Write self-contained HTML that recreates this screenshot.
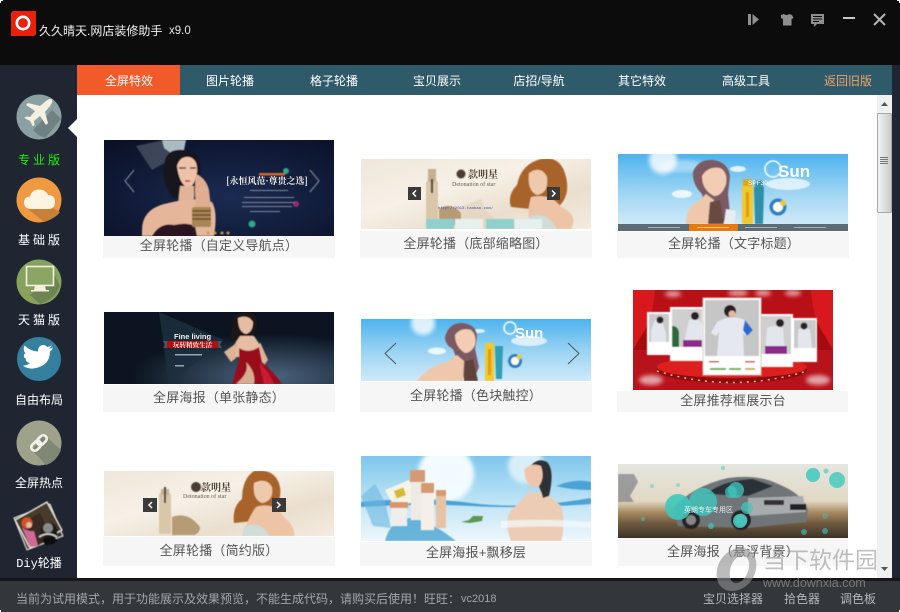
<!DOCTYPE html>
<html lang="zh"><head><meta charset="utf-8"><title>久久晴天网店装修助手</title>
<style>
*{box-sizing:border-box;margin:0;padding:0}
html,body{width:900px;height:612px;overflow:hidden;background:#fff}
body{position:relative;font:12px "Liberation Sans","WenQuanYi Zen Hei","Noto Sans CJK SC",sans-serif}
.a{position:absolute}
.t{position:absolute;white-space:nowrap;line-height:16px;transform:translateX(-50%)}
.tab{color:#fff;top:73px;font-size:12px}
.side{color:#fff;font-size:12px;left:39px}
.cap{background:#f6f6f6;position:absolute}
.c{position:absolute;color:#555;font-size:13px;letter-spacing:.2px;line-height:16px;white-space:nowrap;transform:translateX(-50%)}
svg{position:absolute;display:block;overflow:hidden}
</style></head><body>
<svg width="0" height="0" style="position:absolute"><defs>
<filter id="b"><feGaussianBlur stdDeviation="0.6"/></filter>
<filter id="b2"><feGaussianBlur stdDeviation="2"/></filter>
<linearGradient id="sky" x1="0" y1="0" x2="0" y2="1"><stop offset="0" stop-color="#4db3ee"/><stop offset=".55" stop-color="#9ed5f3"/><stop offset="1" stop-color="#cfe9f8"/></linearGradient>
<linearGradient id="cream" x1="0" y1="0" x2="1" y2="1"><stop offset="0" stop-color="#efe7da"/><stop offset=".4" stop-color="#f6f0e7"/><stop offset=".7" stop-color="#eadfce"/><stop offset="1" stop-color="#f3ebdf"/></linearGradient>
<radialGradient id="navy" cx=".55" cy=".6" r=".8"><stop offset="0" stop-color="#1a2b52"/><stop offset="1" stop-color="#0a0f24"/></radialGradient>
<radialGradient id="dk" cx=".72" cy=".9" r=".6"><stop offset="0" stop-color="#4b6680"/><stop offset="1" stop-color="#0b1420"/></radialGradient>
<linearGradient id="thumb" x1="0" y1="0" x2="1" y2="0"><stop offset="0" stop-color="#f3f3f3"/><stop offset="1" stop-color="#c9c9c9"/></linearGradient>
<linearGradient id="car" x1="0" y1="0" x2="0" y2="1"><stop offset="0" stop-color="#e4e6e0"/><stop offset=".5" stop-color="#e2d8c4"/><stop offset=".65" stop-color="#a98b62"/><stop offset=".8" stop-color="#6f5a40"/><stop offset="1" stop-color="#3c3226"/></linearGradient>
<linearGradient id="sea" x1="0" y1="0" x2="0" y2="1"><stop offset="0" stop-color="#7fc6ec"/><stop offset=".55" stop-color="#bfe4f5"/><stop offset="1" stop-color="#eef7fb"/></linearGradient>
</defs></svg>

<!-- shell -->
<div class="a" style="left:0;top:0;width:900px;height:65px;background:#0c0c0c"></div>
<div class="a" style="left:0;top:65px;width:77px;height:513px;background:#1f2631"></div>
<div class="a" style="left:892px;top:65px;width:8px;height:513px;background:#1f2631"></div>
<div class="a" style="left:77px;top:65px;width:815px;height:30px;background:#2f5a6a"></div>
<div class="a" style="left:77px;top:65px;width:103px;height:30px;background:#f25a29"></div>
<div class="a" style="left:77px;top:95px;width:800px;height:483px;background:#fff"></div>
<div class="a" style="left:877px;top:95px;width:15px;height:483px;background:#f0f0f0"></div>

<!-- logo + title -->
<svg style="left:11px;top:11px" width="25" height="25"><path d="M3 0H25V22Q25 25 22 25H0V3Q0 0 3 0Z" fill="#e8200c"/><circle cx="12" cy="12" r="6.2" fill="none" stroke="#fff" stroke-width="2.6"/></svg>
<div class="a" style="left:39px;top:23px;color:#f2f2f2;font-size:12px;line-height:16px;white-space:nowrap">久久晴天.网店装修助手</div>
<div class="a" style="left:169px;top:23px;color:#e6e6e6;font-size:11.5px;line-height:16px">x9.0</div>

<!-- window icons -->
<svg style="left:745px;top:10px" width="145" height="20" fill="#8f8f8f">
<path d="M3 4h3v11H3zM7.500 4l6.500 5.500L7.500 15z"/>
<path d="M36 5l3-1 1.500 1h2l1.500-1 3 1 1.500 3-2 1v6.500H38V9l-2-1z"/>
<path d="M66 4h13v10h-7l-3 3v-3h-3zM68 6v1h9V6zM68 8.500v1h9v-1zM68 11v1h6v-1z" fill-rule="evenodd"/>
<rect x="98" y="7" width="12" height="2" fill="#c8c8c8"/>
<path d="M129 4l11 11M140 4l-11 11" stroke="#b5b5b5" stroke-width="2" fill="none"/>
</svg>

<!-- tabs -->
<div class="t tab" style="left:129px">全屏特效</div>
<div class="t tab" style="left:230px">图片轮播</div>
<div class="t tab" style="left:334px">格子轮播</div>
<div class="t tab" style="left:437px">宝贝展示</div>
<div class="t tab" style="left:539px">店招/导航</div>
<div class="t tab" style="left:642px">其它特效</div>
<div class="t tab" style="left:746px">高级工具</div>
<div class="t tab" style="left:848px;color:#f0a56a">返回旧版</div>

<!-- sidebar icons -->
<svg style="left:0;top:90px" width="77" height="490">
<!-- plane -->
<circle cx="39" cy="27" r="22.500" fill="#8ba0a2"/>
<path d="M33 40L52 20 61 29 46 47Q40 48 33 40Z" fill="#6b7d80" opacity=".9"/>
<path d="M52 9.500Q50 8 46 11L40 16 28 13 26 15 35 21 30 27 26 26.500 24.500 28 30 31 33 36.500 34.500 35 34 31 40 26 46 35 48 33 45 22 50 16Q53 12 52 9.500Z" fill="#f4f1e2"/>
<!-- cloud -->
<circle cx="39" cy="110" r="22.500" fill="#ef9a42"/>
<path d="M28 119L50 117 60 122Q56 128 44 132Z" fill="#c87f38"/>
<path d="M30 119Q24 118 24 112.500Q24 107 30 106.500Q32 99 40 99.500Q46 100 48 105Q55 105 55 112Q55 119 48 119Z" fill="#fdf5e2"/>
<!-- monitor -->
<circle cx="39" cy="192" r="22.500" fill="#86a25d"/>
<path d="M30 205L54 184 60 196Q54 210 40 214Z" fill="#6f8453"/>
<rect x="26.500" y="176.500" width="27" height="19" fill="#8aa564" stroke="#f3f1dc" stroke-width="1.600"/>
<path d="M35 196h10l1 4h3v1.500H31V200h3z" fill="#f3f1dc"/>
<!-- twitter -->
<circle cx="39" cy="269" r="22" fill="#35809f"/>
<path d="M53 257.500Q51 258.500 49 258.800 51 257.500 52 255.300 50 256.500 47.500 257 45.500 255 43 255 38 255.500 38 261.500 30 261 24.500 255.500 22.500 259.500 25.500 263.500 23.500 263.500 24 267.500 27.500 269 25.500 269.500 26.500 272.500 30 273 26.500 276 22.500 275.500 27 279 33.500 278.500 50 276 50 261.500 52 260 53 257.500Z" fill="#fff"/>
<!-- link -->
<circle cx="39" cy="353" r="22.500" fill="#9ea28b"/>
<path d="M32 360L44 345 61 360Q56 372 46 375Z" fill="#7e8874"/>
<g fill="none" stroke="#f4f3ea" stroke-width="2.600" transform="rotate(-45 39 353)"><rect x="29.500" y="349.500" width="11" height="7" rx="3.500"/><rect x="37.500" y="349.500" width="11" height="7" rx="3.500"/></g>
<!-- diy photo -->
<g filter="url(#b)"><path d="M14 428L50 414 63 446 27 460Z" fill="#3b342a" stroke="#e8e4da" stroke-width="1"/>
<path d="M15 430L47 412 62 440 30 458Z" fill="#4a3a2a" stroke="#efece4" stroke-width="1.200"/>
<path d="M24 432L40 423 52 446 38 456Z" fill="#382a20"/>
<circle cx="27" cy="433" r="5.500" fill="#d2522a"/><path d="M22 437Q27 442 34 441L38 456 30 457Z" fill="#cf6a96"/><circle cx="29" cy="435" r="3" fill="#eeb79a"/>
<circle cx="49" cy="441" r="8.500" fill="#1e1e1e"/><circle cx="48" cy="438" r="5" fill="#8a8a8a"/><path d="M42 450Q50 444 58 450 54 456 45 455Z" fill="#111"/><path d="M39 447Q48 441 57 447" stroke="#ddd" stroke-width="1.500" fill="none"/></g>
<!-- pointer -->
<path d="M68 38L77 29V47Z" fill="#fff"/>
</svg>
<div class="t side" style="left:40.500px;top:152px;color:#22ee11;letter-spacing:3px">专业版</div>
<div class="t side" style="left:40.500px;top:232px;letter-spacing:3px">基础版</div>
<div class="t side" style="left:40.500px;top:312px;letter-spacing:3px">天猫版</div>
<div class="t side" style="top:392px">自由布局</div>
<div class="t side" style="top:475px">全屏热点</div>
<div class="t side" style="top:556px;font-family:'Liberation Mono','WenQuanYi Zen Hei',monospace">Diy轮播</div>

<!-- caption backgrounds -->
<div class="cap" style="left:103px;top:236px;width:232px;height:22px"></div>
<div class="cap" style="left:360px;top:231px;width:232px;height:27px"></div>
<div class="cap" style="left:617px;top:232px;width:232px;height:26px"></div>
<div class="cap" style="left:103px;top:385px;width:232px;height:27px"></div>
<div class="cap" style="left:360px;top:382px;width:232px;height:30px"></div>
<div class="cap" style="left:617px;top:391px;width:231px;height:21px"></div>
<div class="cap" style="left:103px;top:537px;width:232px;height:29px"></div>
<div class="cap" style="left:360px;top:542px;width:232px;height:24px"></div>
<div class="cap" style="left:618px;top:538px;width:230px;height:28px"></div>

<!-- card 1 -->
<svg style="left:104px;top:140px" width="230" height="96">
<rect width="230" height="96" fill="url(#navy)"/>
<g filter="url(#b)">
<path d="M32 6L60 0 70 8 62 22 48 30Z" fill="#5b6673" opacity=".6"/>
<path d="M58 0H82L80 10 68 14 60 8Z" fill="#a9bcc2"/>
<path d="M60 24Q62 8 80 10 98 12 96 34 94 56 88 58H70Q58 46 60 24Z" fill="#18121c"/>
<path d="M73 26Q76 16 85 17 94 19 93 32 91 46 84 48 75 44 73 26Z" fill="#eec2a8"/>
<path d="M75 28h7M86 28h6" stroke="#2a1a20" stroke-width="1.300"/><path d="M81 41h5" stroke="#c0414a" stroke-width="1.600"/>
<path d="M76 46L90 46 90 64H74Z" fill="#e2b299"/>
<path d="M38 90Q38 70 60 64L78 60Q96 58 108 62 114 72 110 96H38Z" fill="#e6b69a"/>
<path d="M48 96Q56 82 70 85 82 82 91 86L93 96Z" fill="#2a1520"/>
<path d="M92 34Q102 38 105 50L107 68 92 70Q90 50 92 34Z" fill="#e0ad92"/>
<rect x="88" y="67" width="19" height="20" rx="2" fill="#a98654"/><path d="M88 71h19M88 75h19M88 79h19" stroke="#5e3a1e" stroke-width="1.200"/>
<circle cx="182" cy="31" r="3" fill="#2aa88a"/><circle cx="192" cy="64" r="3" fill="#9a2a6a"/><circle cx="148" cy="84" r="3.500" fill="#2aa88a"/>
<path d="M30 30L21 41 30 52M206 30L215 41 206 52" stroke="#8a8f9f" stroke-width="1" fill="none"/>
<rect x="155" y="33" width="26" height="2.500" fill="#d9662a"/>
<g fill="#aeb4c4" opacity=".7"><rect x="146" y="50" width="38" height="1"/><rect x="140" y="57" width="50" height="1"/><rect x="138" y="62" width="52" height="1"/><rect x="138" y="66" width="50" height="1"/><rect x="146" y="71" width="30" height="1"/></g>
<g fill="#c79a40"><circle cx="104" cy="93" r="1.500"/><circle cx="111" cy="93" r="1.500"/><circle cx="118" cy="93" r="1.500"/><circle cx="124" cy="93" r="1.500"/></g>
</g>
<text x="163" y="44" text-anchor="middle" fill="#f4f0e8" font-size="9" font-weight="bold" font-family="'Noto Serif CJK SC',serif">[永恒风范·尊贵之选]</text>
</svg>

<!-- card 2 -->
<svg style="left:361px;top:159px" width="230" height="70">
<rect width="230" height="70" fill="url(#cream)"/>
<g filter="url(#b)">
<path d="M120 40Q125 62 160 70H70Q90 50 120 40Z" fill="#e2d0b8" opacity=".6"/>
<rect x="65" y="22" width="12" height="45" rx="2" fill="#d9c7a8"/><rect x="67" y="10" width="8" height="13" fill="#c5b090"/><rect x="70" y="20" width="2" height="14" fill="#333"/>
<path d="M78 50Q90 42 100 54V66H78Z" fill="#b69c76"/>
<path d="M180 0Q200 -4 205 18 210 38 195 50H170L150 48Q146 36 156 26 160 5 180 0Z" fill="#a8642a"/>
<path d="M168 14Q180 6 186 18 188 34 176 36 166 32 168 14Z" fill="#efc9ac"/>
<path d="M170 38Q190 34 200 48 218 56 210 70H172Q164 60 170 38Z" fill="#eec4a6"/>
<path d="M168 58Q185 50 196 70H164Z" fill="#cfdcd8"/>
<rect x="65" y="60" width="28" height="10" fill="#8fd0cf"/><rect x="94" y="60" width="28" height="10" fill="#e6f0ee"/><rect x="125" y="60" width="28" height="10" fill="#8fd0cf"/><rect x="154" y="60" width="27" height="10" fill="#e6f0ee"/>
<circle cx="100" cy="15" r="4.500" fill="#4a3d30"/>
</g>
<text x="107" y="19" fill="#4a3d30" font-size="10" font-weight="bold" font-family="'Noto Serif CJK SC',serif">款明星</text>
<text x="91" y="27" fill="#6a5c4a" font-size="6" font-family="'Liberation Serif',serif">Detonation of star</text>
<text x="77" y="50" fill="#4a4abf" font-size="4" font-family="'Liberation Mono',monospace">http://2013.taobao.com/</text>
<rect x="47" y="28" width="13" height="13" fill="#3c3a38"/><rect x="186" y="28" width="13" height="13" fill="#3c3a38"/>
<path d="M55 31.500l-3 3 3 3M191 31.500l3 3-3 3" stroke="#fff" stroke-width="1.500" fill="none"/>
</svg>

<!-- card 3 -->
<svg style="left:618px;top:154px" width="230" height="77">
<rect width="230" height="70" fill="url(#sky)"/>
<circle cx="45" cy="6" r="14" fill="#fff" opacity=".8" filter="url(#b2)"/>
<ellipse cx="64" cy="12" rx="24" ry="6" fill="#fff" opacity=".4" filter="url(#b2)" />
<g filter="url(#b)">
<ellipse cx="64" cy="40" rx="10" ry="4" fill="#fff" opacity=".8"/>
<ellipse cx="170" cy="30" rx="22" ry="6" fill="#fff" opacity=".7"/><ellipse cx="120" cy="15" rx="8" ry="3" fill="#fff" opacity=".8"/>
<path d="M75 18Q80 5 95 6 110 8 112 22L110 40 112 60 104 70H92L84 40Q74 30 75 18Z" fill="#7c5a64"/>
<path d="M84 22Q90 12 102 14 110 18 108 30 104 42 96 42 84 36 84 22Z" fill="#f2cdb4"/>
<path d="M68 70Q68 52 82 46L88 40 96 46 92 70Z" fill="#efc7aa"/>
<path d="M92 48L102 46 106 70H90Z" fill="#6a4a40"/><path d="M108 55L118 57 116 70H106Z" fill="#e8eef0"/>
<rect x="124" y="31" width="11" height="39" rx="1" fill="#f0c92a"/><rect x="125" y="25" width="9" height="7" fill="#d9a820"/><rect x="128" y="38" width="3" height="25" fill="#e29a18"/>
<path d="M136 33h10l-1 37h-8z" fill="#2f8fa8"/><rect x="137" y="26" width="8" height="7" fill="#3a8fa0"/>
<circle cx="160" cy="53" r="8.500" fill="#2c7fc0"/><circle cx="160" cy="53" r="5" fill="#fff"/><circle cx="165" cy="49" r="3" fill="#f0c92a"/>
<circle cx="155" cy="15" r="8" fill="none" stroke="#fff" stroke-width="1.500"/>
</g>
<text x="160" y="23" fill="#fff" font-size="17" font-weight="bold" font-family="'Liberation Sans',sans-serif">Sun</text>
<text x="130" y="31" fill="#fff" font-size="6.500">SPF30</text>
<rect y="70" width="230" height="7" fill="#5c6c74"/><rect x="71" y="70" width="49" height="7" fill="#e8790f"/>
<g fill="#c8d0d4" opacity=".7"><rect x="30" y="73" width="32" height="1"/><rect x="79" y="73" width="32" height="1" fill="#ffe0b0"/><rect x="127" y="73" width="32" height="1"/><rect x="176" y="73" width="32" height="1"/></g>
</svg>

<!-- card 4 -->
<svg style="left:104px;top:312px" width="230" height="72">
<rect width="230" height="72" fill="url(#dk)"/>
<path d="M55 0L120 28 65 72Z" fill="#1d3040" opacity=".8"/>
<rect x="63" y="29" width="51" height="7" fill="#b30c12"/><path d="M59 29h4v7h-4l2-3.500zM118 29h-4v7h4l-2-3.500z" fill="#445566"/>
<g filter="url(#b)">
<path d="M130 4Q142 -4 152 4 155 16 148 24L134 30Q125 30 127 22Z" fill="#1a1214"/>
<path d="M134 6Q144 2 149 10 149 20 142 22 134 20 134 6Z" fill="#e6bda4"/>
<path d="M128 36L136 24H150L158 36 155 45 132 45 Z" fill="#e6bda4"/>
<path d="M134 30L120 40 127 50 132 46ZM156 30L164 48 158 56 154 40Z" fill="#deb298"/>
<path d="M135 36Q145 42 155 35L158 50Q170 60 178 72H128L135 48Z" fill="#97101f"/>
<path d="M142 50Q146 60 132 72H150Q152 60 142 50Z" fill="#d9ac92"/>
<path d="M155 50Q165 60 170 72H160Z" fill="#c91c30"/>
</g>
<rect x="71" y="42" width="27" height="1.500" fill="#9aa4ad"/><rect x="71" y="53" width="9" height="1.500" fill="#9aa4ad"/>
<text x="70" y="27" fill="#f0f0f0" font-size="7.500" font-weight="bold" font-family="'Liberation Sans',sans-serif">Fine living</text>
<text x="88.500" y="35" text-anchor="middle" fill="#f5e8d8" font-size="6.500" font-weight="bold" font-family="'Noto Serif CJK SC',serif">玩转精致生活</text>
</svg>

<!-- card 5 -->
<svg style="left:361px;top:319px" width="230" height="62">
<rect width="230" height="62" fill="url(#sky)"/>
<circle cx="62" cy="4" r="12" fill="#fff" opacity=".8" filter="url(#b2)"/>
<g filter="url(#b)">
<ellipse cx="76" cy="32" rx="9" ry="3.500" fill="#fff" opacity=".8"/><ellipse cx="168" cy="22" rx="18" ry="5" fill="#fff" opacity=".7"/><ellipse cx="118" cy="12" rx="6" ry="2" fill="#fff" opacity=".8"/>
<path d="M84 18Q88 3 102 4 116 6 116 18L114 30 118 48 112 62H104L92 30Q84 26 84 18Z" fill="#7c5a64"/>
<path d="M94 16Q100 8 110 11 116 16 114 26 110 34 104 34 94 28 94 16Z" fill="#f2cdb4"/>
<path d="M56 62Q66 48 88 42L96 36 103 42 102 62Z" fill="#efc7aa"/>
<path d="M104 42L112 40 117 62H103Z" fill="#5f4238"/>
<rect x="124" y="24" width="9" height="38" rx="1" fill="#f0c92a"/><rect x="127" y="30" width="3" height="26" fill="#e29a18"/>
<path d="M134 27h8l-1 33h-6z" fill="#2f9fb4"/>
<circle cx="154" cy="42" r="7" fill="#2c7fc0"/><circle cx="154" cy="42" r="4" fill="#fff"/><circle cx="158" cy="38" r="2.500" fill="#f0c92a"/>
<circle cx="149" cy="9" r="6" fill="none" stroke="#fff" stroke-width="1.500"/>
</g>
<text x="154" y="19" fill="#fff" font-size="15" font-weight="bold" font-family="'Liberation Sans',sans-serif">Sun</text>
<path d="M35 24L24 34.500 35 45M207 24L218 34.500 207 45" stroke="#4a5560" stroke-width="1" fill="none"/>
</svg>

<!-- card 6 -->
<svg style="left:633px;top:290px" width="200" height="100">
<rect width="200" height="100" fill="#a30b10"/>
<rect width="200" height="30" fill="#b81016"/>
<rect y="60" width="200" height="40" fill="#b8121a"/>
<path d="M0 0H22Q20 30 8 46L0 60Z" fill="#d8181c"/><path d="M200 0H178Q180 30 192 46L200 60Z" fill="#d8181c"/>
<g filter="url(#b2)" fill="#fff" opacity=".6"><ellipse cx="40" cy="4" rx="8" ry="3"/><ellipse cx="105" cy="3" rx="10" ry="3"/><ellipse cx="130" cy="3" rx="8" ry="3"/><ellipse cx="160" cy="3" rx="8" ry="3"/><ellipse cx="18" cy="90" rx="12" ry="5"/><ellipse cx="185" cy="90" rx="12" ry="5"/></g>
<ellipse cx="99" cy="80" rx="75" ry="13" fill="#8c0a10"/><ellipse cx="99" cy="77" rx="75" ry="11" fill="#dd1f1f"/><path d="M24 81Q99 104 174 81" stroke="#f0c060" stroke-width="1.500" stroke-dasharray="2 5" fill="none"/>
<g filter="url(#b)">
<rect x="14" y="22" width="24" height="43" fill="#fff"/><rect x="16" y="24" width="20" height="28" fill="#c9c9c9"/><path d="M22 30q6-4 8 4l3 10v8H18v-12z" fill="#e3e6ec"/><circle cx="27" cy="30" r="3.500" fill="#2a2020"/>
<rect x="160" y="28" width="24" height="44" fill="#fff"/><rect x="161" y="30" width="22" height="28" fill="#c9c9c9"/><path d="M165 40q6-4 12 0l2 18h-14z" fill="#e3e6ec"/><circle cx="171" cy="36" r="3.500" fill="#2a2020"/>
<rect x="37" y="17" width="33" height="54" fill="#fff"/><rect x="39" y="19" width="30" height="38" fill="#cfcfcf"/><path d="M56 30q8-4 13 4v23H50z" fill="#e3e6ec"/><path d="M50 50h19v7H50z" fill="#8a2a8a"/><path d="M39 36q7 0 7 8v13h-7z" fill="#2a6a3a"/><circle cx="62" cy="26" r="4" fill="#2a2020"/>
<rect x="128" y="24" width="32" height="53" fill="#fff"/><rect x="128" y="26" width="30" height="38" fill="#cfcfcf"/><path d="M134 38q8-4 16 0l2 26h-20z" fill="#e3e6ec"/><path d="M132 56h22v8h-22z" fill="#8a2a8a"/><circle cx="147" cy="33" r="4" fill="#2a2020"/>
<rect x="70" y="8" width="58" height="77" fill="#fff" stroke="#d8c8b8"/><rect x="72" y="10" width="54" height="56" fill="#c6c6c6"/>
<path d="M84 32q14-8 28-2l8 10-7 6-3-3 1 23H84l2-24-3 4-5-3z" fill="#e5e8f0"/><path d="M112 30l8 10-6 6-4-6z" fill="#2a6acf"/><circle cx="97" cy="21" r="6" fill="#2a1f20"/><circle cx="99" cy="24" r="3.500" fill="#e3b79e"/>
<g fill="#c02030"><rect x="76" y="71" width="10" height="1.500"/><rect x="112" y="71" width="10" height="1.500"/></g>
<g fill="#6aaa40"><rect x="77" y="78" width="16" height="2"/><rect x="96" y="78" width="12" height="2"/><rect x="112" y="78" width="10" height="2" fill="#e0a030"/></g>
</g>
</svg>

<!-- card 7 -->
<svg style="left:104px;top:471px" width="230" height="65">
<rect width="230" height="65" fill="url(#cream)"/>
<g filter="url(#b)">
<rect x="55" y="22" width="12" height="41" rx="2" fill="#d9c7a8"/><rect x="57" y="18" width="8" height="6" fill="#c5b090"/><rect x="60" y="16" width="2" height="16" fill="#444"/>
<path d="M68 46Q84 40 96 56 96 62 90 64H68Z" fill="#b69c76"/>
<path d="M150 0Q172 -3 176 16 178 28 170 38L150 50 130 52Q128 36 138 28 138 8 150 0Z" fill="#a8642a"/>
<path d="M150 12Q162 6 168 16 170 30 158 32 148 28 150 12Z" fill="#efc9ac"/>
<path d="M152 36Q170 30 180 46 192 56 190 65H140Q142 50 152 36Z" fill="#eec4a6"/>
<path d="M140 56Q155 48 166 65H138Z" fill="#cfdcd8"/>
<circle cx="92" cy="16" r="5" fill="#4a3d30"/>
</g>
<text x="97" y="20" fill="#4a3d30" font-size="10" font-weight="bold" font-family="'Noto Serif CJK SC',serif">款明星</text>
<text x="79" y="27" fill="#6a5c4a" font-size="6" font-family="'Liberation Serif',serif">Detonation of star</text>
<rect x="39" y="27" width="14" height="14" fill="#3c3a38"/><rect x="168" y="27" width="14" height="14" fill="#3c3a38"/>
<path d="M48 31l-3 3 3 3M173 31l3 3-3 3" stroke="#fff" stroke-width="1.500" fill="none"/>
</svg>

<!-- card 8 -->
<svg style="left:361px;top:456px" width="230" height="85">
<rect width="230" height="85" fill="url(#sea)"/>
<circle cx="85" cy="18" r="28" fill="#f2fbff" filter="url(#b2)"/>
<circle cx="165" cy="10" r="18" fill="#d8eef8" filter="url(#b2)"/>
<g filter="url(#b)">
<path d="M0 46Q60 40 110 47T230 42V48Q160 53 110 50T0 51Z" fill="#4aa3d6"/>
<path d="M195 30Q215 22 230 26V34Q210 34 195 30Z" fill="#4aa3d6"/>
<path d="M0 40L14 28 24 46 30 72 12 70Z" fill="#69b6df" opacity=".6"/>
<path d="M24 85Q30 62 50 62 70 65 95 85Z" fill="#3f9fd0" opacity=".75"/>
<path d="M24 34L48 24 58 44 34 52Z" fill="#f5f3e5"/><rect x="34" y="33" width="10" height="8" fill="#d8b830" transform="rotate(-20 39 37)"/>
<rect x="30" y="48" width="16" height="22" fill="#eeeeee"/><rect x="29" y="46" width="18" height="6" fill="#d9946a"/>
<rect x="50" y="24" width="14" height="40" fill="#eeeae4"/><rect x="49" y="14" width="15" height="12" rx="1" fill="#d59a72"/>
<rect x="60" y="36" width="13" height="38" fill="#f5efe8"/><rect x="60" y="27" width="13" height="10" rx="1" fill="#d59a72"/>
<rect x="75" y="34" width="10" height="38" fill="#e7c3a4"/><rect x="75" y="34" width="10" height="6" fill="#d59a72"/>
<path d="M100 66l8-2 4-4h10l-1 5-12 2z" fill="#5a9a50"/>
<path d="M150 85Q140 60 155 50L168 36 184 36 200 50Q205 66 200 85Z" fill="#ecccb4"/>
<path d="M166 14Q176 0 186 6 194 14 188 40L182 42Q178 26 170 20Z" fill="#2e3236"/>
<path d="M163 14Q170 6 180 10 184 22 178 30 170 34 165 24Z" fill="#efc6ac"/>
<path d="M140 65Q180 62 230 66V72Q185 69 140 72Z" fill="#f4fbff" opacity=".7"/>
</g>
</svg>

<!-- card 9 -->
<svg style="left:618px;top:464px" width="230" height="74">
<rect width="230" height="74" fill="url(#car)"/>
<g filter="url(#b)">
<path d="M0 10h16l4 8-8 14 4 6H0z" fill="#6c7276" opacity=".6"/>
<path d="M55 44Q75 22 110 14 140 10 160 20 185 30 190 46L188 58 130 64 60 62Z" fill="#6f7478"/>
<path d="M88 30Q105 16 135 15L155 22 130 32Z" fill="#2c3338"/>
<path d="M130 34L185 32 188 48 130 52Z" fill="#a9acae"/>
<rect x="146" y="36" width="20" height="5" fill="#333"/>
<rect x="172" y="40" width="16" height="6" fill="#222"/>
<circle cx="73" cy="56" r="9" fill="#222"/><circle cx="73" cy="56" r="5" fill="#888"/>
<circle cx="123" cy="56" r="10" fill="#222"/><circle cx="123" cy="56" r="6" fill="#999"/>
</g>
<g fill="#3fc8bd">
<circle cx="60" cy="43" r="13" opacity=".9"/><circle cx="85" cy="38" r="14" opacity=".8"/><circle cx="118" cy="26" r="8" opacity=".75"/><circle cx="113" cy="28" r="6" opacity=".7"/>
<circle cx="129" cy="44" r="6" opacity=".7"/><circle cx="122" cy="57" r="7" opacity=".9"/><circle cx="93" cy="62" r="3" opacity=".7"/>
<circle cx="195" cy="11" r="7" opacity=".85"/><circle cx="219" cy="16" r="8" opacity=".8"/><circle cx="208" cy="7" r="2.500" opacity=".6"/><circle cx="186" cy="68" r="3" opacity=".6"/><circle cx="207" cy="67" r="3" opacity=".6"/><circle cx="207" cy="52" r="3" opacity=".4"/>
<circle cx="105" cy="4" r="2" opacity=".5"/><circle cx="60" cy="21" r="2" opacity=".4"/><circle cx="34" cy="22" r="2" opacity=".4"/><circle cx="25" cy="55" r="2" opacity=".5"/>
</g>
<text x="66" y="48" fill="#e8f4f2" font-size="7">英朗专车专用区</text>
</svg>

<!-- captions -->
<div class="c" style="left:219px;top:238px">全屏轮播（自定义导航点）</div>
<div class="c" style="left:476px;top:236px">全屏轮播（底部缩略图）</div>
<div class="c" style="left:734px;top:236px">全屏轮播（文字标题）</div>
<div class="c" style="left:219px;top:390px">全屏海报（单张静态）</div>
<div class="c" style="left:476px;top:388px">全屏轮播（色块触控）</div>
<div class="c" style="left:733px;top:393px">全屏推荐框展示台</div>
<div class="c" style="left:219px;top:543px">全屏轮播（简约版）</div>
<div class="c" style="left:476px;top:545px">全屏海报+飘移层</div>
<div class="c" style="left:733px;top:544px">全屏海报（悬浮背景）</div>

<!-- scrollbar -->
<svg style="left:877px;top:95px" width="15" height="483">
<path d="M7.500 7L11 11H4Z" fill="#555"/>
<rect x=".5" y="18.500" width="14" height="99" rx="1" fill="url(#thumb)" stroke="#a8a8a8"/>
<path d="M3 62.500h8M3 64.500h8M3 66.500h8M3 68.500h8" stroke="#777" stroke-width="1"/>
<path d="M4 472h7L7.500 476Z" fill="#555"/>
</svg>

<!-- footer -->
<div class="a" style="left:0;top:578px;width:900px;height:3px;background:#15171a"></div>
<div class="a" style="left:0;top:581px;width:900px;height:31px;background:#33373b"></div>
<div class="a" style="left:16px;top:591px;color:#a3a7aa;font-size:12px;line-height:16px;white-space:nowrap">当前为试用模式，用于功能展示及效果预览，不能生成代码，请购买后使用！旺旺：</div>
<div class="a" style="left:461px;top:591px;color:#a3a7aa;font-size:11px;line-height:16px;white-space:nowrap">vc2018</div>
<div class="t" style="left:733px;top:591px;color:#b5b8ba">宝贝选择器</div>
<div class="t" style="left:802px;top:591px;color:#b5b8ba">拾色器</div>
<div class="t" style="left:858px;top:591px;color:#b5b8ba">调色板</div>

<!-- watermark -->
<svg style="left:712px;top:545px" width="50" height="50"><path fill-rule="evenodd" d="M29 3C40 3 46 12 44 24 42 37 31 46 20 46 9 46 3 37 5 25 7 12 18 3 29 3ZM30 11C24 11 19 18 18 26 17 34 20 39 25 38 31 37 36 30 37 22 38 15 35 11 30 11Z" fill="#8f8f8f" opacity=".6"/></svg>
<div class="a" style="left:763px;top:546px;color:rgba(150,150,150,.6);font-size:23px;line-height:28px;white-space:nowrap;font-family:'Liberation Sans','Noto Sans CJK SC',sans-serif">当下软件园</div>
<div class="a" style="left:763px;top:576px;color:rgba(150,150,150,.7);font-size:12.500px;line-height:14px;white-space:nowrap">www.downxia.com</div>

<!-- corner notches -->
<div class="a" style="left:0;top:0;width:3px;height:1px;background:#fff"></div>
<div class="a" style="left:0;top:1px;width:1px;height:2px;background:#fff"></div>
<div class="a" style="left:897px;top:0;width:3px;height:1px;background:#fff"></div>
<div class="a" style="left:899px;top:1px;width:1px;height:2px;background:#fff"></div>
<div class="a" style="left:0;top:610px;width:1px;height:2px;background:#fff"></div>
<div class="a" style="left:899px;top:610px;width:1px;height:2px;background:#fff"></div>
</body></html>
